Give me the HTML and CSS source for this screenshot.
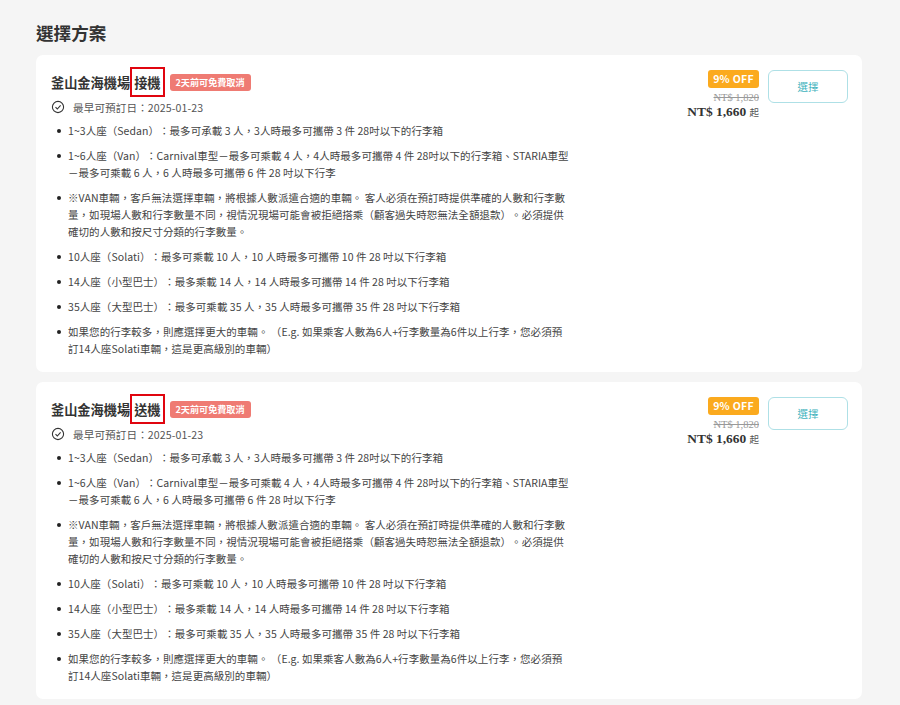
FILE: index.html
```html
<!DOCTYPE html>
<html lang="zh-Hant">
<head>
<meta charset="utf-8">
<title>選擇方案</title>
<link rel="stylesheet" href="styles.css">
</head>
<body>
<main class="page">
<h1 class="heading">選擇方案</h1>
<section class="card">
  <div class="info">
    <div class="title-row">
      <h2 class="title">釜山金海機場<span class="mark">接機</span></h2>
      <span class="tag">2天前可免費取消</span>
    </div>
    <div class="date"><svg class="check" viewBox="0 0 14 14"><circle cx="7" cy="7" r="5.6"/><path d="M4.5 7.2l1.8 1.8 3.3-3.6"/></svg><span>最早可預訂日：2025-01-23</span></div>
    <ul class="list">
      <li>1~3人座（Sedan）：最多可承載 3 人，3人時最多可攜帶 3 件 28吋以下的行李箱</li>
      <li>1~6人座（Van）：Carnival車型－最多可乘載 4 人，4人時最多可攜帶 4 件 28吋以下的行李箱、STARIA車型－最多可乘載 6 人，6 人時最多可攜帶 6 件 28 吋以下行李</li>
      <li>※VAN車輛，客戶無法選擇車輛，將根據人數派遣合適的車輛。 客人必須在預訂時提供準確的人數和行李數量，如現場人數和行李數量不同，視情況現場可能會被拒絕搭乘（顧客過失時恕無法全額退款）。必須提供確切的人數和按尺寸分類的行李數量。</li>
      <li>10人座（Solati）：最多可乘載 10 人，10 人時最多可攜帶 10 件 28 吋以下行李箱</li>
      <li>14人座（小型巴士）：最多乘載 14 人，14 人時最多可攜帶 14 件 28 吋以下行李箱</li>
      <li>35人座（大型巴士）：最多可乘載 35 人，35 人時最多可攜帶 35 件 28 吋以下行李箱</li>
      <li>如果您的行李較多，則應選擇更大的車輛。 （E.g. 如果乘客人數為6人+行李數量為6件以上行李，您必須預訂14人座Solati車輛，這是更高級別的車輛）</li>
    </ul>
  </div>
  <div class="side">
    <div class="prices">
      <span class="off">9% OFF</span>
      <span class="old">NT$ 1,820</span>
      <span class="now">NT$ 1,660 <small>起</small></span>
    </div>
    <button class="pick">選擇</button>
  </div>
</section>
<section class="card">
  <div class="info">
    <div class="title-row">
      <h2 class="title">釜山金海機場<span class="mark">送機</span></h2>
      <span class="tag">2天前可免費取消</span>
    </div>
    <div class="date"><svg class="check" viewBox="0 0 14 14"><circle cx="7" cy="7" r="5.6"/><path d="M4.5 7.2l1.8 1.8 3.3-3.6"/></svg><span>最早可預訂日：2025-01-23</span></div>
    <ul class="list">
      <li>1~3人座（Sedan）：最多可承載 3 人，3人時最多可攜帶 3 件 28吋以下的行李箱</li>
      <li>1~6人座（Van）：Carnival車型－最多可乘載 4 人，4人時最多可攜帶 4 件 28吋以下的行李箱、STARIA車型－最多可乘載 6 人，6 人時最多可攜帶 6 件 28 吋以下行李</li>
      <li>※VAN車輛，客戶無法選擇車輛，將根據人數派遣合適的車輛。 客人必須在預訂時提供準確的人數和行李數量，如現場人數和行李數量不同，視情況現場可能會被拒絕搭乘（顧客過失時恕無法全額退款）。必須提供確切的人數和按尺寸分類的行李數量。</li>
      <li>10人座（Solati）：最多可乘載 10 人，10 人時最多可攜帶 10 件 28 吋以下行李箱</li>
      <li>14人座（小型巴士）：最多乘載 14 人，14 人時最多可攜帶 14 件 28 吋以下行李箱</li>
      <li>35人座（大型巴士）：最多可乘載 35 人，35 人時最多可攜帶 35 件 28 吋以下行李箱</li>
      <li>如果您的行李較多，則應選擇更大的車輛。 （E.g. 如果乘客人數為6人+行李數量為6件以上行李，您必須預訂14人座Solati車輛，這是更高級別的車輛）</li>
    </ul>
  </div>
  <div class="side">
    <div class="prices">
      <span class="off">9% OFF</span>
      <span class="old">NT$ 1,820</span>
      <span class="now">NT$ 1,660 <small>起</small></span>
    </div>
    <button class="pick">選擇</button>
  </div>
</section>
</main>
</body>
</html>
```
FILE: styles.css
```css
* { box-sizing: border-box; }
html, body { margin: 0; height: 705px; overflow: hidden; }
body { background: #f5f5f5; color: #333; font-family: "Noto Sans CJK TC", "Noto Sans", sans-serif; text-spacing-trim: space-all; }
.page { padding: 20px 38px 0 36px; }
.heading { margin: 0 0 10px; font-size: 17.6px; line-height: 25px; font-weight: 700; color: #333; }
.card { display: flex; justify-content: space-between; height: 317px; margin-bottom: 10px; padding: 12px 14px 0 15px; background: #fff; border-radius: 7px; }
.info { width: 522px; }
.title-row { display: flex; align-items: center; gap: 5px; height: 30px; }
.title { margin: 0; font-size: 13.2px; font-weight: 700; color: #333; display: flex; align-items: center; }
.mark { display: flex; align-items: center; height: 30px; padding: 0 2px; border: 2px solid #e0050f; }
.tag { height: 17px; padding: 0 6px; border-radius: 3px; background: #ef7b73; color: #fff; font-size: 9.1px; font-weight: 700; line-height: 17px; }
.date { display: flex; align-items: center; gap: 8px; height: 18px; margin-top: 1px; font-size: 10.6px; letter-spacing: .1px; color: #555; }
.check { width: 14px; height: 14px; fill: none; stroke: #333; stroke-width: 1.1; }
.list { margin: 6px 0 0; padding: 0 0 0 17px; width: 521px; list-style: none; font-size: 10.5px; letter-spacing: .05px; line-height: 17px; color: #444; }
.list li { position: relative; margin-bottom: 8px; }
.list li::before { content: ""; position: absolute; left: -11px; top: 6.5px; width: 4px; height: 4px; border-radius: 50%; background: #222; }
.side { display: flex; align-items: flex-start; gap: 9px; padding-top: 3px; }
.prices { display: flex; flex-direction: column; align-items: flex-end; }
.off { height: 18px; padding: 0 5px; border-radius: 3px; background: #fbaa1e; color: #fff; font-size: 10.5px; font-weight: 700; letter-spacing: .3px; line-height: 18px; }
.old { margin-top: 4px; font-family: "Liberation Serif", serif; font-size: 10.5px; line-height: 12px; color: #999; text-decoration: line-through; }
.now { margin-top: -1px; font-family: "Liberation Serif", serif; font-weight: 700; font-size: 13.4px; line-height: 17px; color: #333; }
.now small { font-family: "Noto Sans CJK TC", sans-serif; font-weight: 400; font-size: 9.5px; color: #555; }
.pick { width: 80px; height: 33px; padding: 0; background: #fff; border: 1px solid #aee0e6; border-radius: 6px; color: #3fb3bd; font-family: inherit; font-size: 10.5px; }
```
